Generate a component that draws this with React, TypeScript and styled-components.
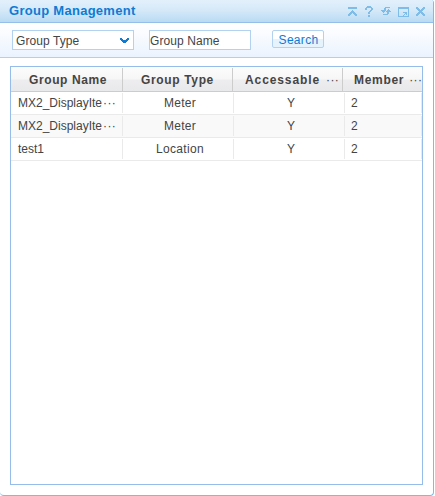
import React from "react";
import styled, { createGlobalStyle } from "styled-components";

const GlobalStyle = createGlobalStyle`
  * { box-sizing: border-box; }
  body { margin: 0; background: #fff; overflow: hidden; }
`;

const Window = styled.section`
  width: 434px;
  height: 496px;
  display: flex;
  flex-direction: column;
  font: 12px "Liberation Sans", Arial, sans-serif;
  color: #444;
  background: #fff;
  border-right: 1px solid #7dbbe8;
  border-bottom: 1px solid #7dbbe8;
  border-radius: 0 3px 4px 4px;
  overflow: hidden;
`;

const TitleBar = styled.header`
  height: 23px;
  flex: none;
  display: flex;
  align-items: center;
  justify-content: space-between;
  padding: 0 7px 0 9px;
  background: linear-gradient(#e2f0fb, #d6e9f9 45%, #b9dbf2);
  border-bottom: 1px solid #93bfea;
`;

const Title = styled.h1`
  margin: 0;
  font-size: 13px;
  line-height: 20px;
  letter-spacing: 0.28px;
  color: #0f7bd3;
`;

const Tools = styled.div`
  display: flex;
  gap: 6px;
  padding-top: 2px;
`;

const Tool = styled.button`
  width: 11px;
  height: 12px;
  padding: 0;
  border: 0;
  background: none;
  color: #7fbde8;
`;

const Glyph = styled.svg`
  display: block;
  flex: none;
  fill: currentColor;
  shape-rendering: crispEdges;
`;

const Toolbar = styled.div`
  height: 35px;
  flex: none;
  display: flex;
  align-items: flex-start;
  padding: 7px 12px 0;
  background: linear-gradient(#fff, #fafcff 30%, #eaf3fe);
  border-bottom: 1px solid #b3cfea;
`;

const Field = styled.div<{ $width: number; $inset: number }>`
  width: ${(p) => p.$width}px;
  height: 20px;
  display: flex;
  align-items: center;
  justify-content: space-between;
  padding: 1px 4px 0 ${(p) => p.$inset}px;
  background: #fff;
  border: 1px solid #b2d2ef;
  letter-spacing: 0.08px;
  white-space: nowrap;
  & + & { margin-left: 15px; }
`;

const Arrow = styled.span`
  color: #0f7bd3;
`;

const SearchButton = styled.button`
  width: 52px;
  height: 18px;
  margin-left: 21px;
  padding: 2px 0 0 1px;
  border: 1px solid #b2d2ef;
  border-radius: 2px;
  background: linear-gradient(#fff 50%, #e6f3fd 50%);
  font: inherit;
  line-height: 14px;
  letter-spacing: 0.3px;
  color: #0f7bd3;
`;

const Grid = styled.div`
  flex: 1;
  margin: 8px 10px 10px;
  border: 1px solid #96bce9;
  overflow: hidden;
`;

const HeaderRow = styled.div`
  height: 25px;
  display: grid;
  grid-template-columns: 112px 110px 110px 79px;
  padding-top: 1px;
  background: linear-gradient(#fcfcfc, #f6f6f7 50%, #ededef 55%, #e8e9eb);
  border-bottom: 1px solid #ccc;
`;

const HeaderCell = styled.div<{ $inset: number; $spacing: number }>`
  display: flex;
  align-items: center;
  padding-left: ${(p) => p.$inset}px;
  border-right: 1px solid #ccc;
  font-weight: bold;
  letter-spacing: ${(p) => p.$spacing}px;
  white-space: nowrap;
  overflow: hidden;
  &:last-child { border-right: 0; }
`;

const Row = styled.div`
  height: 23px;
  display: grid;
  grid-template-columns: 112px 111px 111px 77px;
  padding: 1px 0;
  border-bottom: 1px solid #eaeaea;
  &:nth-child(odd) { background: #f9f9f9; }
`;

/* The header row is the first child, so the second data row is the odd one shaded. */
const Cell = styled.div<{ $center?: boolean; $inset?: number; $spacing?: number }>`
  display: flex;
  align-items: center;
  justify-content: ${(p) => (p.$center ? "center" : "flex-start")};
  padding-left: ${(p) => p.$inset ?? 4}px;
  border-right: 1px solid #eaeaea;
  letter-spacing: ${(p) => p.$spacing ?? 0}px;
  white-space: nowrap;
`;

const Dots = styled.span<{ $gap: number }>`
  margin-left: ${(p) => p.$gap}px;
  font-weight: normal;
  letter-spacing: 0.4px;
`;

const rows = [
  { name: "MX2_DisplayIte", clipped: true, type: "Meter", access: "Y", members: 2 },
  { name: "MX2_DisplayIte", clipped: true, type: "Meter", access: "Y", members: 2 },
  { name: "test1", clipped: false, type: "Location", access: "Y", members: 2 },
];

const headers = [
  { label: "Group Name", inset: 18, spacing: 0.6 },
  { label: "Group Type", inset: 18, spacing: 0.65 },
  { label: "Accessable", inset: 12, spacing: 0.9, gap: 6 },
  { label: "Member", inset: 11, spacing: 0.7, gap: 5 },
];

// Pixel icons: each string is one row, X marks a filled pixel.
const tools = [
  {
    label: "Collapse",
    pixels: [
      "", ".XXXXXXXXX", ".XXXXXXXXX", "", ".....X", "....XXX",
      "...XXXXX", "..XXX.XXX", ".XXX...XXX", ".XX.....XX",
    ],
  },
  {
    label: "Help",
    pixels: [
      "...XXXX", "..XXXXXX", ".XX....XX", ".XX....XX", "......XX", ".....XX",
      "....XX", "....XX", "", "....XX", "....XX",
    ],
  },
  {
    label: "Refresh",
    pixels: [
      "", "....XXXXX", "...XX", "...XX..X", "XXXXX.XXX", ".XXX.XXXXX",
      "..X...XX", "......XX", "..XXXXX",
    ],
  },
  {
    label: "Restore",
    pixels: [
      "", "XXXXXXXXXXX", "XXXXXXXXXXX", "X.........X", "X.........X", "X.........X",
      "X....XXXX.X", "X......XX.X", "X.....X.X.X", "X....X....X", "XXXXXXXXXXX",
    ],
  },
  {
    label: "Close",
    pixels: [
      "", ".XX.....XX", ".XXX...XXX", "..XXX.XXX", "...XXXXX", "....XXX",
      "...XXXXX", "..XXX.XXX", ".XXX...XXX", ".XX.....XX",
    ],
  },
];

const chevron = ["XX.....XX", "XXX...XXX", ".XXXXXXX", "..XXXXX", "...XXX"];

function PixelIcon({ pixels, width, height }: { pixels: string[]; width: number; height: number }) {
  const d = pixels
    .map((row, y) =>
      [...row.matchAll(/X+/g)]
        .map((run) => `M${run.index} ${y}h${run[0].length}v1h-${run[0].length}z`)
        .join("")
    )
    .join("");
  return (
    <Glyph width={width} height={height} viewBox={`0 0 ${width} ${height}`}>
      <path d={d} />
    </Glyph>
  );
}

export default function App() {
  return (
    <>
      <GlobalStyle />
      <Window>
        <TitleBar>
          <Title>Group Management</Title>
          <Tools>
            {tools.map((t) => (
              <Tool key={t.label} aria-label={t.label}>
                <PixelIcon pixels={t.pixels} width={11} height={12} />
              </Tool>
            ))}
          </Tools>
        </TitleBar>
        <Toolbar>
          <Field $width={122} $inset={3}>
            Group Type
            <Arrow>
              <PixelIcon pixels={chevron} width={9} height={5} />
            </Arrow>
          </Field>
          <Field $width={102} $inset={0}>Group Name</Field>
          <SearchButton>Search</SearchButton>
        </Toolbar>
        <Grid>
          <HeaderRow>
            {headers.map((h) => (
              <HeaderCell key={h.label} $inset={h.inset} $spacing={h.spacing}>
                {h.label}
                {h.gap && <Dots $gap={h.gap}>···</Dots>}
              </HeaderCell>
            ))}
          </HeaderRow>
          {rows.map((r, i) => (
            <Row key={i}>
              <Cell $inset={7}>
                {r.name}
                {r.clipped && <Dots $gap={1}>···</Dots>}
              </Cell>
              <Cell $center $spacing={0.3}>{r.type}</Cell>
              <Cell $center>{r.access}</Cell>
              <Cell $inset={6}>{r.members}</Cell>
            </Row>
          ))}
        </Grid>
      </Window>
    </>
  );
}
